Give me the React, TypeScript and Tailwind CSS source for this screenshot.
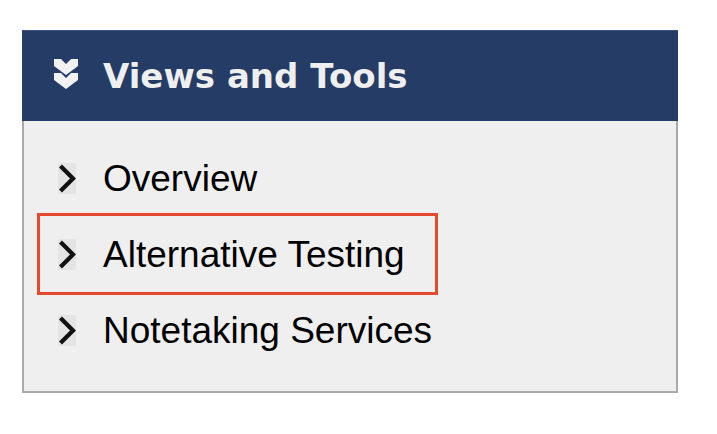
import React from 'react'

const items = ['Overview', 'Alternative Testing', 'Notetaking Services']

function DoubleChevron() {
  return (
    <svg width="26" height="31" viewBox="0 0 26 31" className="mb-[3px] shrink-0">
      <g fill="#f2f2f2">
        <polygon points="1,0 8,0 13,5 18,0 25,0 25,7 13,16 1,7" />
        <polygon points="1,14 8,14 13,19 18,14 25,14 25,21 13,30 1,21" />
      </g>
    </svg>
  )
}

function Arrow() {
  return (
    <span className="flex h-[31px] w-[18px] shrink-0 items-center justify-center bg-[#e4e4e4]">
      <svg width="18" height="31" viewBox="0 0 18 31">
        <polyline points="2.5,3 15,15.5 2.5,28" fill="none" stroke="#111" strokeWidth="4.2" strokeLinejoin="miter" />
      </svg>
    </span>
  )
}

export default function App() {
  return (
    <div className="min-h-[434px] w-[717px] bg-white pt-[30px] pl-[22px]">
      <div className="w-[656px]">
        <div className="flex h-[91px] items-center gap-[24px] border-t border-[#3b5580] bg-[#243c66] pl-[31px]">
          <DoubleChevron />
          <h2
            className="text-[34px] font-bold text-[#efefef]"
            style={{ fontFamily: '"DejaVu Sans", Verdana, sans-serif' }}
          >
            Views and Tools
          </h2>
        </div>
        <ul className="border-2 border-t-0 border-[#a9a9a9] bg-[#efefef] pt-[19px] pb-[23px]">
          {items.map((item, i) => (
            <li key={item} className="relative flex h-[76px] items-center pl-[34px]">
              <Arrow />
              <span
                className="ml-[27px] text-[37px] leading-none text-black"
                style={{ fontFamily: '"Liberation Sans", Arial, sans-serif' }}
              >
                {item}
              </span>
              {i === 1 && (
                <span className="pointer-events-none absolute top-[-3px] left-[13px] h-[82px] w-[401px] border-[3px] border-[#e44a2e]" />
              )}
            </li>
          ))}
        </ul>
      </div>
    </div>
  )
}
